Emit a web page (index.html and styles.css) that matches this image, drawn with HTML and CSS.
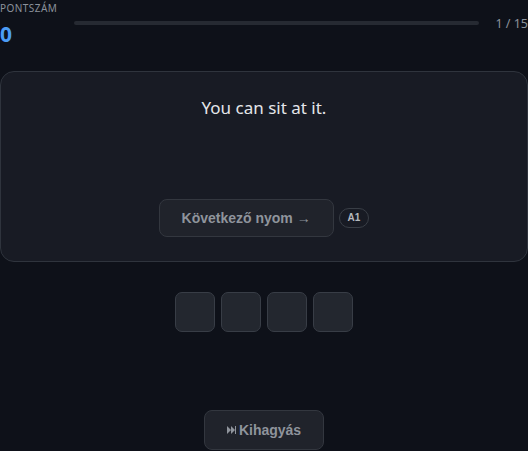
FILE: index.html
```html
<!DOCTYPE html>
<html lang="hu">
<head>
<meta charset="utf-8">
<link rel="stylesheet" href="styles.css">
</head>
<body>
<div class="page">
  <header class="top">
    <div class="score">
      <div class="score-label">PONTSZÁM</div>
      <div class="score-value">0</div>
    </div>
    <div class="progress"><div class="progress-fill"></div></div>
    <div class="count">1 / 15</div>
  </header>

  <section class="card">
    <p class="question">You can sit at it.</p>
    <div class="hint-row">
      <button class="btn hint-btn">Következő nyom →</button>
      <span class="level">A1</span>
    </div>
  </section>

  <div class="slots">
    <div class="slot"></div>
    <div class="slot"></div>
    <div class="slot"></div>
    <div class="slot"></div>
  </div>

  <div class="skip-row">
    <button class="btn skip-btn"><svg class="skip-icon" width="9" height="8" viewBox="0 0 9 8"><path d="M0 0L4 4L0 8Z M4 0L8 4L4 8Z" fill="#8f949c"/><rect x="8" y="0" width="1" height="8" fill="#8f949c"/></svg>Kihagyás</button>
  </div>
</div>
</body>
</html>
```

FILE: styles.css
```css
html, body {
  margin: 0;
  padding: 0;
  background: #0e1119;
}
body {
  font-family: "Noto Sans", "Open Sans", sans-serif;
  color: #e5e7eb;
  overflow: hidden;
}
.page {
  width: 528px;
}
.top {
  display: flex;
  align-items: flex-start;
  height: 71px;
}
.score {
  width: 74px;
  flex: none;
}
.score-label {
  font-size: 10px;
  line-height: 14px;
  margin-top: 1px;
  color: #8b919b;
  letter-spacing: 0.45px;
}
.score-value {
  font-size: 21px;
  font-weight: 700;
  line-height: 24px;
  margin-top: 7px;
  color: #4c9cf5;
}
.progress {
  flex: 1;
  height: 4px;
  margin-top: 21px;
  border-radius: 2px;
  background: #262a32;
}
.progress-fill {
  width: 0;
  height: 100%;
}
.count {
  margin-left: 16px;
  font-size: 12.5px;
  line-height: 16px;
  margin-top: 16px;
  color: #8b919b;
  white-space: nowrap;
}
.card {
  box-sizing: border-box;
  height: 191px;
  border: 1px solid #2f343d;
  border-radius: 14px;
  background: #181b24;
  display: flex;
  flex-direction: column;
  align-items: center;
}
.question {
  margin: 24px 0 0;
  font-size: 17px;
  line-height: 24px;
  color: #e4e6ea;
}
.hint-row {
  margin-top: 79px;
  display: flex;
  align-items: center;
  gap: 5px;
}
.btn {
  font-family: "Liberation Sans", Arial, sans-serif;
  font-weight: 700;
  font-size: 14px;
  color: #8f949c;
  background: #20232b;
  border: 1px solid #33373f;
  border-radius: 8px;
}
.hint-btn {
  width: 175px;
  height: 38px;
  padding: 0;
}
.level {
  font-family: "Liberation Sans", Arial, sans-serif;
  font-weight: 700;
  font-size: 10px;
  line-height: 18px;
  padding: 0 8px;
  border: 1px solid #393e46;
  border-radius: 10px;
  color: #b4b8be;
  background: transparent;
}
.slots {
  display: flex;
  justify-content: center;
  gap: 6px;
  margin-top: 30px;
}
.slot {
  box-sizing: border-box;
  width: 40px;
  height: 40px;
  border: 1px solid #383d46;
  border-radius: 7px;
  background: #23272f;
}
.skip-row {
  display: flex;
  justify-content: center;
  margin-top: 78px;
}
.skip-btn {
  width: 120px;
  height: 40px;
  padding: 0;
  display: flex;
  align-items: center;
  justify-content: center;
}
.skip-icon {
  margin-right: 3px;
}
```
